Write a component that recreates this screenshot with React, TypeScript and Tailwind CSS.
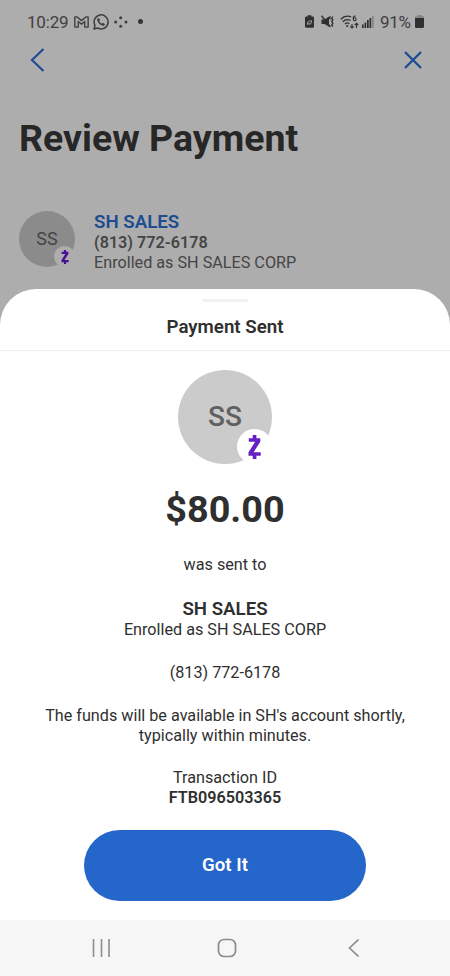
import React from "react";

function ZelleMark({ className }: { className?: string }) {
  return (
    <svg viewBox="0 0 13 24" fill="currentColor" className={className}>
      <path d="M4.700 0h3.700v3.200h3.900v3.500L5.600 17.200h7.100v3.600H8.400V24H4.700v-3.200H.5v-3.500L7.200 6.700H.8V3.200h3.900Z" />
    </svg>
  );
}

function StatusBar() {
  return (
    <div className="flex h-[43px] items-center pl-[27px] pr-[26px] text-[#3f3f3f]">
      <span className="w-[42px] whitespace-nowrap text-[17px] leading-5 tracking-[-0.2px]">
        10:29
      </span>
      {/* gmail */}
      <svg viewBox="0 0 16 13" fill="none" className="ml-[5px] h-3 w-[15px]">
        <path
          d="M.8 1v11h3.700V6L8 8.800 11.500 6v6h3.700V1h-2.400L8 5 3.200 1Z"
          stroke="currentColor"
          strokeWidth="1.5"
          strokeLinejoin="round"
        />
      </svg>
      {/* whatsapp */}
      <svg viewBox="0 0 16 16" fill="none" className="ml-1 h-4 w-4">
        <path
          d="M1 15l1-3.700A7 7 0 1 1 4.700 14L1 15Z"
          stroke="currentColor"
          strokeWidth="1.5"
          strokeLinejoin="round"
        />
        <path
          d="M5.500 4c-1 .2-1.500 1.100-1.300 2.100.5 2.800 2.900 5.200 5.600 5.700 1.100.2 2-.5 2.200-1.500L9.900 8.700l-1.100 1C7.700 9.200 6.900 8.300 6.300 7.200l.9-1.100L5.500 4Z"
          fill="currentColor"
        />
      </svg>
      <svg viewBox="0 0 14 12" fill="currentColor" className="ml-[5px] h-3 w-3.5">
        <circle cx="1.700" cy="6" r="1.500" />
        <circle cx="6.700" cy="1.800" r="1.500" />
        <circle cx="6.700" cy="10.200" r="1.500" />
        <circle cx="12" cy="6" r="1.500" />
      </svg>
      <span className="ml-[10px] size-[5px] rounded-full bg-[#353535]" />

      <div className="ml-auto flex items-center">
        {/* battery protection */}
        <svg viewBox="0 0 10 14" className="h-[13px] w-[9px]">
          <path
            d="M3 0h4v1.500h1.500Q10 1.500 10 3v9.500Q10 14 8.500 14h-7Q0 14 0 12.500V3Q0 1.500 1.500 1.500H3Z"
            fill="#303030"
          />
          <path
            d="M2.800 9.800c-.3-2.400 1-3.600 4.500-3.600.2 3-1 4-3.200 3.700M2.500 11l2.600-2.800"
            stroke="#adadad"
            strokeWidth="1"
            fill="none"
          />
        </svg>
        {/* muted, vibrating */}
        <svg viewBox="0 0 13 13" fill="none" className="ml-[7px] h-[13px] w-[13px]">
          <path d="M.5 4.500h3L8 1.500v10.300L3.500 9h-3Z" fill="#303030" />
          <path
            d="M.5.8l9 11.200M9.200 1.200 8.600 3l.8 1.500M11.800 1.500l-1 1.700 1 1.700-1 1.700 1 1.700-1 1.700 1 1.700"
            stroke="#303030"
            strokeWidth="1.400"
          />
        </svg>
        {/* wifi 6 */}
        <svg viewBox="0 0 19 14" fill="none" className="ml-1.5 h-3.5 w-[19px]">
          <path
            d="M.8 4.300C4 1 8 .7 11.200 2M2.800 6.700c2.200-2.300 5.200-2.600 7.700-1.200M5 9c1.300-1.200 3-1.300 4.300-.3"
            stroke="#303030"
            strokeWidth="1.300"
          />
          <circle cx="7.200" cy="11" r="1.100" fill="#303030" />
          <path
            d="M15.600 1.100c-1.700-.4-2.500.7-2.500 2.500M12 9v4M10.300 11.300 12 13l1.700-1.700M16.500 13V8.500M14.800 10l1.700-1.700 1.700 1.700"
            stroke="#303030"
            strokeWidth="1.100"
          />
          <circle cx="14.700" cy="4.200" r="1.400" stroke="#303030" strokeWidth="1.100" />
        </svg>
        {/* signal */}
        <svg viewBox="0 0 12 12" fill="#303030" className="ml-[3px] h-3 w-3">
          <rect x="0" y="8.500" width="1.700" height="3.500" />
          <rect x="2.500" y="6.500" width="1.700" height="5.500" />
          <rect x="5" y="4" width="1.700" height="8" />
          <rect x="7.500" y="2" width="1.700" height="10" />
          <rect x="10" y="0" width="1.700" height="12" fill="#858585" />
        </svg>
        <span className="ml-1.5 w-[31px] whitespace-nowrap text-[17px] leading-5 tracking-[-0.3px]">
          91%
        </span>
        <svg viewBox="0 0 9 13" className="ml-[4px] h-[13px] w-[9px]">
          <path d="M2.500 0h4v1.300H8Q9 1.300 9 2.500V4H0V2.500Q0 1.300 1 1.300h1.500Z" fill="#858585" />
          <path d="M0 3h9v8.500Q9 13 7.500 13h-6Q0 13 0 11.500Z" fill="#303030" />
        </svg>
      </div>
    </div>
  );
}

function ReviewPayment() {
  return (
    <div className="h-[289px]">
      <StatusBar />
      <div className="flex h-[33px] items-center justify-between pl-[30px] pr-7 text-[#1d4c90]">
        <svg viewBox="0 0 15 24" fill="none" className="h-6 w-[15px]">
          <path d="M13.500 1 2 12l11.500 11" stroke="currentColor" strokeWidth="2.200" />
        </svg>
        <svg viewBox="0 0 18 18" fill="none" className="size-[18px]">
          <path d="M1 1l16 16M17 1 1 17" stroke="currentColor" strokeWidth="2.300" />
        </svg>
      </div>
      <h1 className="mt-10 pl-[19px] text-[37.500px] font-bold leading-11 text-[#272727]">
        Review Payment
      </h1>
      <div className="mt-[51px] flex pl-[19px]">
        <div className="relative flex size-14 items-center justify-center rounded-full bg-[#8b8b8b] pb-px text-[18px] text-[#454545]">
          SS
          <span className="absolute left-[35px] top-[35px] flex size-[21px] items-center justify-center rounded-full bg-[#adadad]">
            <ZelleMark className="h-3.5 w-2 text-[#4b0f96]" />
          </span>
        </div>
        <div className="ml-[19px] whitespace-nowrap text-[16.2px] leading-5 text-[#454545]">
          <p className="text-[18.700px] font-semibold leading-[22px] text-[#1d4c90]">SH SALES</p>
          <p className="font-semibold">(813) 772-6178</p>
          <p>Enrolled as SH SALES CORP</p>
        </div>
      </div>
    </div>
  );
}

function PaymentSent() {
  return (
    <section className="flex h-[631px] flex-col rounded-t-[36px] bg-white text-center text-[16.2px] text-[#2f2f2f]">
      <div className="flex h-[62px] flex-col items-center border-b border-[#f0f0f0]">
        <span className="mt-[10px] h-[3px] w-[46px] bg-[#f1f1f1]" />
        <h2 className="mt-[14px] text-[18.700px] font-semibold leading-[22px]">Payment Sent</h2>
      </div>
      <div className="relative mx-auto mt-[19px] flex size-[94px] shrink-0 items-center justify-center rounded-full bg-[#cbcbcb] text-[28px] font-medium text-[#606060]">
        SS
        <span className="absolute left-[59px] top-[59px] flex size-[35px] items-center justify-center rounded-full bg-white">
          <ZelleMark className="h-6 w-[13px] text-[#6420c4]" />
        </span>
      </div>
      <p className="mt-[23px] text-[37.800px] font-bold leading-11">$80.00</p>
      <p className="mt-6 leading-5">was sent to</p>
      <p className="mt-[23px] text-[18.700px] font-semibold leading-[22px]">SH SALES</p>
      <p className="leading-5">Enrolled as SH SALES CORP</p>
      <p className="mt-[23px] leading-5">(813) 772-6178</p>
      <p className="mt-[23px] leading-5">
        The funds will be available in SH's account shortly,
        <br />
        typically within minutes.
      </p>
      <p className="mt-[22px] leading-5">Transaction ID</p>
      <p className="font-semibold leading-5">FTB096503365</p>
      <button className="mx-auto mt-[22px] h-[71px] w-[282px] shrink-0 rounded-full bg-[#2566ca] text-[18.700px] font-semibold text-white">
        Got It
      </button>
    </section>
  );
}

function NavBar() {
  return (
    <nav className="flex h-14 items-center bg-[#f6f6f6] pl-[92px] text-[#8c8c8c]">
      <svg viewBox="0 0 18 18" fill="none" className="size-[18px]">
        <path d="M1.500 0v18M9.500 0v18M17 0v18" stroke="currentColor" strokeWidth="1.600" />
      </svg>
      <svg viewBox="0 0 20 20" fill="none" className="ml-[107px] size-5">
        <rect x="1.500" y="1.500" width="17" height="17" rx="5.500" stroke="currentColor" strokeWidth="1.700" />
      </svg>
      <svg viewBox="0 0 12 18" fill="none" className="ml-[110px] h-[18px] w-3">
        <path d="M11.500.5 2.500 9l9 8.500" stroke="currentColor" strokeWidth="1.600" />
      </svg>
    </nav>
  );
}

export default function App() {
  return (
    <main className="h-[976px] w-[450px] overflow-hidden bg-[#adadad] font-[Roboto,sans-serif]">
      <ReviewPayment />
      <PaymentSent />
      <NavBar />
    </main>
  );
}
